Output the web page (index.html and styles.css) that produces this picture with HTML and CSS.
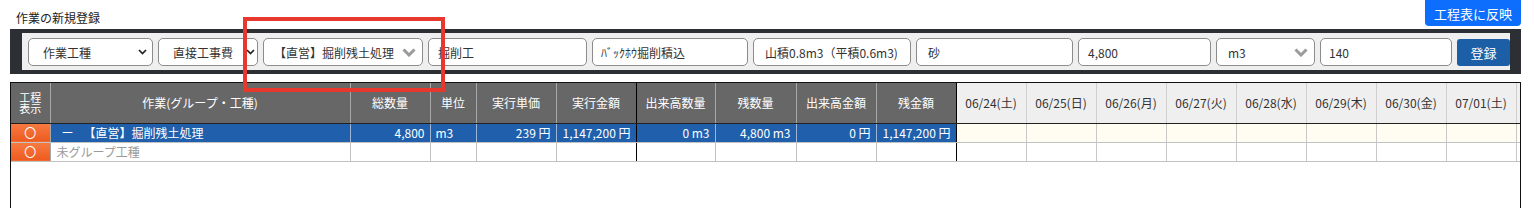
FILE: index.html
```html
<!DOCTYPE html>
<html lang="ja">
<head>
<meta charset="utf-8">
<title>作業の新規登録</title>
<link rel="stylesheet" href="styles.css">
</head>
<body>
<div class="page">
  <div class="topbar">
    <h1 class="title">作業の新規登録</h1>
    <button class="btn-reflect" type="button">工程表に反映</button>
  </div>

  <div class="form-bar">
    <div class="form-inner">
      <div class="ctl sel w-kind"><span>作業工種</span><svg class="chev-s" width="9" height="6" viewBox="0 0 9 6"><path d="M1 1 L4.5 4.6 L8 1" /></svg></div>
      <div class="ctl sel w-cost"><span>直接工事費</span><svg class="chev-s" width="9" height="6" viewBox="0 0 9 6"><path d="M1 1 L4.5 4.6 L8 1" /></svg></div>
      <div class="ctl sel w-group"><span>【直営】掘削残土処理</span><svg class="chev-l" width="14" height="9" viewBox="0 0 14 9"><path d="M1.5 1.5 L7 7 L12.5 1.5" /></svg></div>
      <div class="ctl inp w-name">掘削工</div>
      <div class="ctl inp w-spec">ﾊﾞｯｸﾎｳ掘削積込</div>
      <div class="ctl inp w-vol">山積0.8m3（平積0.6m3)</div>
      <div class="ctl inp w-soil">砂</div>
      <div class="ctl inp w-qty">4,800</div>
      <div class="ctl sel w-unit"><span>m3</span><svg class="chev-l" width="14" height="9" viewBox="0 0 14 9"><path d="M1.5 1.5 L7 7 L12.5 1.5" /></svg></div>
      <div class="ctl inp w-price">140</div>
      <button class="btn-save" type="button">登録</button>
    </div>
  </div>

  <div class="grid-wrap">
    <table class="grid">
      <colgroup>
        <col class="c-show"><col class="c-name"><col class="c-num"><col class="c-unit"><col class="c-num"><col class="c-num">
        <col class="c-num2"><col class="c-num3"><col class="c-num"><col class="c-num">
        <col class="c-day"><col class="c-day"><col class="c-day"><col class="c-day"><col class="c-day"><col class="c-day"><col class="c-day"><col class="c-day"><col class="c-day">
      </colgroup>
      <thead>
        <tr>
          <th class="h-dark h-first"><span class="two-line"><span class="ln">工程</span><span class="ln">表示</span></span></th>
          <th class="h-dark">作業(グループ・工種)</th>
          <th class="h-dark">総数量</th>
          <th class="h-dark">単位</th>
          <th class="h-dark">実行単価</th>
          <th class="h-dark sep">実行金額</th>
          <th class="h-dark">出来高数量</th>
          <th class="h-dark">残数量</th>
          <th class="h-dark">出来高金額</th>
          <th class="h-dark sep">残金額</th>
          <th class="h-day">06/24(土)</th>
          <th class="h-day">06/25(日)</th>
          <th class="h-day">06/26(月)</th>
          <th class="h-day">06/27(火)</th>
          <th class="h-day">06/28(水)</th>
          <th class="h-day">06/29(木)</th>
          <th class="h-day">06/30(金)</th>
          <th class="h-day">07/01(土)</th>
          <th class="h-day"></th>
        </tr>
      </thead>
      <tbody>
        <tr class="row-group">
          <td class="show"><span class="circle">〇</span></td>
          <td class="blue name"><span class="toggle">ー</span>【直営】掘削残土処理</td>
          <td class="blue num">4,800</td>
          <td class="blue">m3</td>
          <td class="blue num">239 円</td>
          <td class="blue num sep">1,147,200 円</td>
          <td class="blue num">0 m3</td>
          <td class="blue num">4,800 m3</td>
          <td class="blue num">0 円</td>
          <td class="blue num sep">1,147,200 円</td>
          <td class="day"></td><td class="day"></td><td class="day"></td><td class="day"></td><td class="day"></td><td class="day"></td><td class="day"></td><td class="day"></td><td class="day"></td>
        </tr>
        <tr class="row-none">
          <td class="show"><span class="circle">〇</span></td>
          <td class="plain name muted">未グループ工種</td>
          <td class="plain"></td>
          <td class="plain"></td>
          <td class="plain"></td>
          <td class="plain sep"></td>
          <td class="plain"></td>
          <td class="plain"></td>
          <td class="plain"></td>
          <td class="plain sep"></td>
          <td class="day"></td><td class="day"></td><td class="day"></td><td class="day"></td><td class="day"></td><td class="day"></td><td class="day"></td><td class="day"></td><td class="day"></td>
        </tr>
      </tbody>
    </table>
  </div>

  <div class="annot"></div>
</div>
</body>
</html>
```

FILE: styles.css
```css
* { box-sizing: border-box; }

body {
  margin: 0;
  background: #fff;
  color: #222;
  font-family: "Noto Sans CJK JP", "Noto Sans", sans-serif;
  font-size: 12px;
}

.page {
  position: relative;
  height: 208px;
  overflow: hidden;
}

/* top line */
.topbar {
  display: flex;
  justify-content: space-between;
  align-items: flex-start;
  height: 29px;
  padding-right: 13px;
}
.title {
  margin: 0;
  padding: 9px 0 0 16px;
  font-size: 12px;
  font-weight: normal;
  line-height: 18px;
  color: #222;
}
.btn-reflect {
  height: 26px;
  width: 96px;
  padding: 0;
  border: none;
  border-radius: 0 0 4px 4px;
  background: #0d6efd;
  color: #fff;
  font-family: inherit;
  font-size: 13px;
}

/* form */
.form-bar {
  margin: 0 13px 0 10px;
  padding: 4px 11px 4px 12px;
  background: #2c3034;
}
.form-inner {
  display: flex;
  align-items: center;
  gap: 5px;
  padding: 5px 0 4px 6px;
  background: #efefef;
}
.ctl {
  display: flex;
  align-items: center;
  flex: none;
  height: 28px;
  padding: 0 9px;
  border: 1px solid #8c8c8c;
  border-radius: 5px;
  background: #fff;
  color: #333;
  font-size: 12px;
  white-space: nowrap;
}
.sel {
  justify-content: space-between;
  padding: 0 5px 0 14px;
}
.w-kind { width: 125px; }
.w-cost { width: 100px; padding-right: 2px; }
.w-group { width: 160px; padding-left: 10px; padding-right: 6px; }
.w-name { width: 159px; }
.w-spec { width: 156px; padding-left: 8px; }
.w-vol { width: 158px; padding-left: 11px; }
.w-soil { width: 157px; padding-left: 11px; }
.w-qty { width: 133px; }
.w-unit { width: 99px; padding-left: 11px; padding-right: 6px; }
.w-price { width: 132px; padding-left: 8px; }

.chev-s path {
  fill: none;
  stroke: #222;
  stroke-width: 1.7;
}
.chev-l path {
  fill: none;
  stroke: #9b9b9b;
  stroke-width: 3;
}

.btn-save {
  flex: none;
  width: 53px;
  height: 27px;
  padding: 0;
  border: none;
  border-radius: 3px;
  background: #1c5fa6;
  color: #fff;
  font-family: inherit;
  font-size: 13px;
}

/* grid */
.grid-wrap {
  margin: 8px 13px 0 10px;
  height: 140px;
  border: 1px solid #111;
  overflow: hidden;
}
.grid {
  border-collapse: collapse;
  table-layout: fixed;
  width: 1575px;
}
.c-show { width: 39px; }
.c-name { width: 300px; }
.c-num { width: 80px; }
.c-num2 { width: 79px; }
.c-num3 { width: 81px; }
.c-unit { width: 46px; }
.c-day { width: 70px; }

.grid th {
  height: 40px;
  padding: 0 2px;
  font-weight: normal;
  font-size: 12px;
  white-space: nowrap;
  border-bottom: 1px solid #222;
}
.h-dark {
  background: #676767;
  color: #fff;
  border-left: 1px solid #a8a8a8;
  border-right: 1px solid #a8a8a8;
}
.h-first { border-left: none; }
.two-line {
  display: flex;
  flex-direction: column;
  align-items: center;
  font-size: 11px;
}
.ln {
  display: block;
  height: 11px;
  line-height: 11px;
  overflow: visible;
}
.h-day {
  background: #efefef;
  color: #333;
  border-left: 1px solid #cfcfcf;
  border-right: 1px solid #cfcfcf;
}
.grid .sep { border-right: 1px solid #000; }

.grid td {
  height: 19px;
  padding: 0 5px;
  font-size: 12px;
  line-height: 17px;
  white-space: nowrap;
  border-bottom: 1px solid #c2c2c2;
}
.show {
  background: linear-gradient(#f77b42, #ee5a1f);
  color: #fff;
  text-align: center;
  border-right: 1px solid #a8a8a8;
}
.grid td.show { padding: 0; }
.circle { font-size: 12px; }

.blue {
  background: #1f5fac;
  color: #fff;
  border-right: 1px solid #9fb5d6;
}
.plain {
  background: #fff;
  border-right: 1px solid #c2c2c2;
}
.num { text-align: right; }
.grid td.name { padding-left: 6px; }
.toggle {
  display: inline-block;
  width: 20px;
  margin-left: 5px;
  margin-right: 2px;
}
.muted { color: #9a9a9a; }

.day {
  border-left: 1px solid #c8c8c8;
  border-right: 1px solid #c8c8c8;
}
.row-group .day { background: #fffcf1; }
.row-none .day { background: #fff; }

/* annotation frame drawn over the screenshot */
.annot {
  position: absolute;
  left: 243px;
  top: 17px;
  width: 202px;
  height: 75px;
  border: 4px solid #e6382c;
  pointer-events: none;
}
```
